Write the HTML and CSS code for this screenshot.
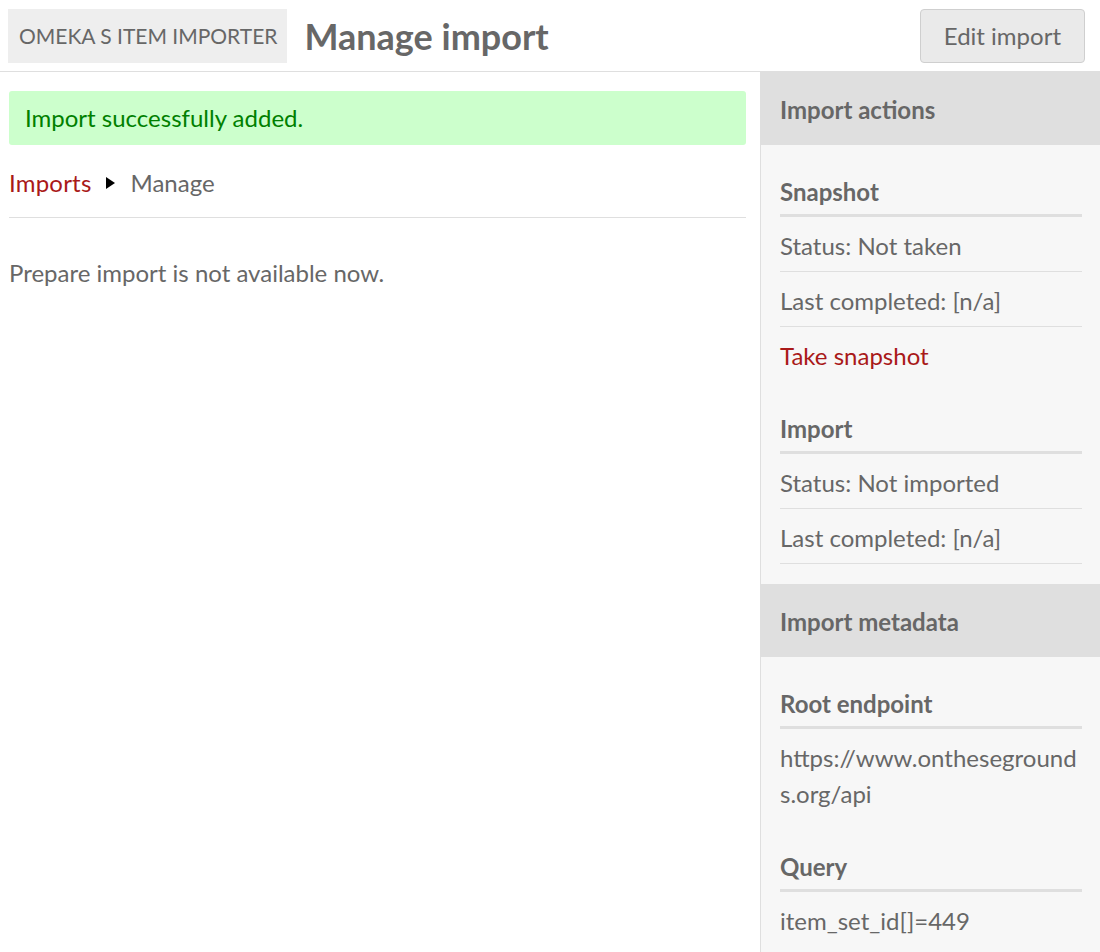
FILE: index.html
```html
<!DOCTYPE html>
<html lang="en">
<head>
<meta charset="utf-8">
<title>Manage import</title>
<link rel="stylesheet" href="styles.css">
</head>
<body>
<div class="page">
  <header class="topbar">
    <div class="module">Omeka S Item Importer</div>
    <h1 class="title">Manage import</h1>
    <a class="button" href="#">Edit import</a>
  </header>
  <div class="layout">
    <main class="content">
      <div class="flash">Import successfully added.</div>
      <nav class="breadcrumbs">
        <a href="#" class="crumb-link">Imports</a>
        <span class="crumb-sep"></span>
        <span class="crumb-current">Manage</span>
      </nav>
      <p class="note">Prepare import is not available now.</p>
    </main>
    <aside class="sidebar">
      <div class="panel-head">Import actions</div>
      <section class="panel-section">
        <h4 class="sub-head">Snapshot</h4>
        <div class="row">Status: Not taken</div>
        <div class="row">Last completed: [n/a]</div>
        <div class="row last"><a href="#" class="action">Take snapshot</a></div>
        <h4 class="sub-head">Import</h4>
        <div class="row">Status: Not imported</div>
        <div class="row">Last completed: [n/a]</div>
      </section>
      <div class="panel-head">Import metadata</div>
      <section class="panel-section">
        <h4 class="sub-head">Root endpoint</h4>
        <div class="row last wrap">https://www.onthesegrounds.org/api</div>
        <h4 class="sub-head">Query</h4>
        <div class="row last">item_set_id[]=449</div>
      </section>
    </aside>
  </div>
</div>
</body>
</html>
```
FILE: styles.css
```css
html, body {
  margin: 0;
  padding: 0;
}
body {
  font-family: Lato, "Open Sans", sans-serif;
  color: #676767;
  font-size: 24px;
  line-height: 36px;
  background: #fff;
}
.page {
  display: flex;
  flex-direction: column;
  height: 952px;
  overflow: hidden;
}
.topbar {
  display: flex;
  align-items: center;
  height: 71px;
  border-bottom: 1px solid #dfdfdf;
  flex: none;
}
.module {
  margin-left: 8px;
  height: 54px;
  box-sizing: border-box;
  padding: 0 10px 0 11px;
  display: flex;
  align-items: center;
  background: #eee;
  text-transform: uppercase;
  font-size: 21px;
}
.title {
  margin: 0 0 0 17px;
  font-size: 36px;
  font-weight: 700;
  line-height: 54px;
  flex: 1;
}
.button {
  margin-right: 15px;
  height: 54px;
  box-sizing: border-box;
  padding: 0 23px;
  display: flex;
  align-items: center;
  background: #eaeaea;
  border: 1px solid #cfcfcf;
  border-radius: 4px;
  color: #676767;
  text-decoration: none;
}
.layout {
  flex: 1;
  display: grid;
  grid-template-columns: 760px 340px;
}
.content {
  padding: 19px 14px 0 9px;
}
.flash {
  background: #cfc;
  color: #008000;
  border-radius: 3px;
  padding: 9px 16px;
}
.breadcrumbs {
  margin-top: 20px;
  padding-bottom: 16px;
  border-bottom: 1px solid #dfdfdf;
  display: flex;
  align-items: center;
}
.crumb-link {
  color: #a91919;
  text-decoration: none;
  letter-spacing: 0.2px;
}
.crumb-sep {
  width: 0;
  height: 0;
  border-top: 6px solid transparent;
  border-bottom: 6px solid transparent;
  border-left: 9px solid #000;
  margin: 0 15px 0 15px;
}
.note {
  margin: 37px 0 0;
}
.sidebar {
  background: #f7f7f7;
  border-left: 1px solid #dfdfdf;
}
.panel-head {
  background: #dfdfdf;
  font-weight: 700;
  height: 73px;
  box-sizing: border-box;
  padding: 20px 19px 17px;
}
.panel-section {
  padding: 0 18px 20px 19px;
}
.sub-head {
  margin: 30px 0 0;
  font-size: 24px;
  font-weight: 700;
  line-height: 36px;
  padding-bottom: 4px;
  border-bottom: 3px solid #dfdfdf;
}
.panel-section .sub-head:first-child {
  margin-top: 29px;
}
.row {
  padding: 11px 0 7px;
  border-bottom: 1px solid #dfdfdf;
}
.row.last {
  border-bottom: none;
}
.wrap {
  word-break: break-all;
}
.action {
  color: #a91919;
  text-decoration: none;
}
```
